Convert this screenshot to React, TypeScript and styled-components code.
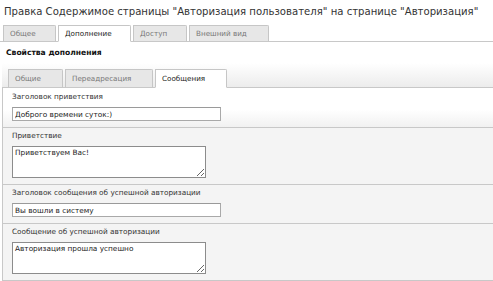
import React from "react";
import styled, { createGlobalStyle } from "styled-components";

const Global = createGlobalStyle`
  html, body { margin: 0; padding: 0; background: #fff; }
  body { font-family: "DejaVu Sans", Verdana, sans-serif; overflow: hidden; }
  * { box-sizing: border-box; }
`;

const Page = styled.div`
  width: 493px;
  height: 281px;
  overflow: hidden;
`;

const Title = styled.h1`
  margin: 0;
  padding: 6px 0 0 4px;
  height: 25px;
  font-size: 10.1px;
  line-height: 12px;
  font-weight: normal;
  color: #333;
  white-space: nowrap;
`;

const TabBar = styled.div<{ $indent: number }>`
  display: flex;
  align-items: flex-end;
  gap: 2px;
  padding-left: ${(p) => p.$indent}px;
  border-bottom: 1px solid #c8c8c8;
`;

const Tab = styled.div<{ $w: number; $active?: boolean; $h: number }>`
  width: ${(p) => p.$w}px;
  height: ${(p) => p.$h}px;
  margin-bottom: -1px;
  border: 1px solid #c6c6c6;
  border-bottom: ${(p) => (p.$active ? "1px solid #fff" : "1px solid #c8c8c8")};
  border-top-right-radius: 2px;
  background: ${(p) => (p.$active ? "#fff" : "#e7e7e7")};
  color: ${(p) => (p.$active ? "#222" : "#777")};
  font-size: 7.2px;
  line-height: ${(p) => p.$h - 2}px;
  padding-left: 6px;
  white-space: nowrap;
`;

const Section = styled.div`
  padding-left: 2px;
`;

const SectionTitle = styled.div`
  padding: 5px 0 0 4px;
  height: 27px;
  font-size: 7.6px;
  line-height: 12px;
  font-weight: bold;
  color: #111;
`;

const SubBar = styled.div`
  margin-top: -12px;
  padding-top: 12px;
  background: linear-gradient(to bottom, #fff 0px, #fff 6px, #ececec 30px);
`;

const Panel = styled.div`
  border-left: 1px solid #c8c8c8;
`;

const Row = styled.div<{ $first?: boolean }>`
  padding: ${(p) => (p.$first ? 3 : 2)}px 0 6px 9px;
  border-bottom: 1px solid #c8c8c8;
  background: ${(p) =>
    p.$first ? "linear-gradient(to bottom, #fff 0, #fff 55%, #f1f1f1 100%)" : "#f4f4f4"};
`;

const Label = styled.div`
  font-size: 7.3px;
  line-height: 12px;
  color: #333;
  white-space: nowrap;
  margin-bottom: 4px;
`;

const TextInput = styled.input`
  display: block;
  width: 209px;
  height: 14px;
  margin: 0;
  padding: 0 2px;
  border: 1px solid #a9a9a9;
  border-top-color: #9a9a9a;
  background: #fff;
  font-family: "DejaVu Sans", Verdana, sans-serif;
  font-size: 7.35px;
  color: #222;
  outline: none;
`;

const TextArea = styled.textarea`
  display: block;
  width: 194px;
  height: 32px;
  margin: 0;
  padding: 1px 2px;
  border: 1px solid #8c8c8c;
  background: #fff;
  font-family: "DejaVu Sans", Verdana, sans-serif;
  font-size: 7.35px;
  line-height: 10px;
  color: #222;
  outline: none;
  resize: both;
`;

const outerTabs = [
  { t: "Общее", w: 53 },
  { t: "Дополнение", w: 73, active: true },
  { t: "Доступ", w: 54 },
  { t: "Внешний вид", w: 80 },
];

const innerTabs = [
  { t: "Общие", w: 55 },
  { t: "Переадресация", w: 88 },
  { t: "Сообщения", w: 72, active: true },
];

export default function App() {
  return (
    <Page>
      <Global />
      <Title>Правка Содержимое страницы "Авторизация пользователя" на странице "Авторизация"</Title>
      <TabBar $indent={3}>
        {outerTabs.map((x) => (
          <Tab key={x.t} $w={x.w} $h={17} $active={x.active}>
            {x.t}
          </Tab>
        ))}
      </TabBar>
      <Section>
        <SectionTitle>Свойства дополнения</SectionTitle>
        <SubBar>
          <TabBar $indent={6}>
            {innerTabs.map((x) => (
              <Tab key={x.t} $w={x.w} $h={19} $active={x.active}>
                {x.t}
              </Tab>
            ))}
          </TabBar>
        </SubBar>
        <Panel>
          <Row $first>
            <Label>Заголовок приветствия</Label>
            <TextInput defaultValue="Доброго времени суток:)" />
          </Row>
          <Row>
            <Label>Приветствие</Label>
            <TextArea defaultValue="Приветствуем Вас!" />
          </Row>
          <Row>
            <Label>Заголовок сообщения об успешной авторизации</Label>
            <TextInput defaultValue="Вы вошли в систему" />
          </Row>
          <Row>
            <Label>Сообщение об успешной авторизации</Label>
            <TextArea defaultValue="Авторизация прошла успешно" />
          </Row>
        </Panel>
      </Section>
    </Page>
  );
}
